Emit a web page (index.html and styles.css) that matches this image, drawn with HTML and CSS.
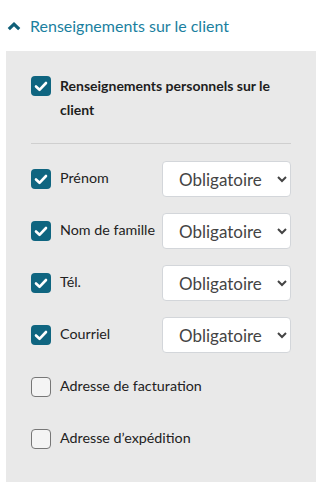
FILE: index.html
```html
<!DOCTYPE html>
<html lang="fr">
<head>
  <meta charset="UTF-8">
  <title>Renseignements sur le client</title>
  <link rel="stylesheet" href="styles.css">
</head>
<body>
  <h3 class="section-title">
    <svg class="caret" width="14" height="9" viewBox="0 0 14 9"><polyline points="1.8,7.2 7,2.2 12.2,7.2" /></svg>
    Renseignements sur le client
  </h3>

  <div class="panel">
    <div class="row title-row">
      <span class="box checked"><svg viewBox="0 0 20 20"><polyline points="5,10.5 8.5,13.8 15,7" /></svg></span>
      <span class="title-label">Renseignements personnels sur le client</span>
    </div>

    <hr class="divider">

    <div class="row">
      <span class="box checked"><svg viewBox="0 0 20 20"><polyline points="5,10.5 8.5,13.8 15,7" /></svg></span>
      <span class="label">Prénom</span>
      <select class="required"><option>Obligatoire</option><option>Facultatif</option></select>
    </div>
    <div class="row">
      <span class="box checked"><svg viewBox="0 0 20 20"><polyline points="5,10.5 8.5,13.8 15,7" /></svg></span>
      <span class="label">Nom de famille</span>
      <select class="required"><option>Obligatoire</option><option>Facultatif</option></select>
    </div>
    <div class="row">
      <span class="box checked"><svg viewBox="0 0 20 20"><polyline points="5,10.5 8.5,13.8 15,7" /></svg></span>
      <span class="label">Tél.</span>
      <select class="required"><option>Obligatoire</option><option>Facultatif</option></select>
    </div>
    <div class="row">
      <span class="box checked"><svg viewBox="0 0 20 20"><polyline points="5,10.5 8.5,13.8 15,7" /></svg></span>
      <span class="label">Courriel</span>
      <select class="required"><option>Obligatoire</option><option>Facultatif</option></select>
    </div>
    <div class="row">
      <span class="box"></span>
      <span class="label">Adresse de facturation</span>
    </div>
    <div class="row">
      <span class="box"></span>
      <span class="label">Adresse d’expédition</span>
    </div>
  </div>
</body>
</html>
```

FILE: styles.css
```css
body {
  margin: 0;
  font-family: 'Lato', 'Open Sans', sans-serif;
  background-color: #fff;
  color: #222;
}
.section-title {
  display: flex;
  align-items: center;
  margin: 0;
  padding: 10px 0 0 7px;
  height: 31px;
  font-size: 16px;
  font-weight: normal;
  line-height: 24px;
  color: #1b7fa0;
}
.caret {
  margin-right: 9px;
  margin-top: 1px;
}
.caret polyline {
  fill: none;
  stroke: #0f5f78;
  stroke-width: 3.2;
}
.panel {
  width: 260px;
  margin: 10px 0 0 6px;
  padding: 23px 25px 25px 25px;
  background-color: #e9e9e9;
}
.row {
  display: flex;
  align-items: center;
  min-height: 36px;
  margin-bottom: 16px;
  font-size: 14.3px;
}
.row:last-child {
  margin-bottom: 0;
}
.title-row {
  align-items: flex-start;
  margin-bottom: 0;
  font-size: 14px;
}
.title-row .box {
  margin-top: 2px;
}
.title-label {
  font-weight: bold;
  line-height: 24px;
  color: #1d1d1d;
}
.box {
  flex-shrink: 0;
  width: 18px;
  height: 18px;
  margin-right: 9px;
  border: 1px solid #777;
  border-radius: 4px;
  background-color: #f4f4f4;
}
.box.checked {
  width: 20px;
  height: 20px;
  border: none;
  background-color: #0f6580;
}
.box svg {
  display: block;
  width: 20px;
  height: 20px;
}
.box polyline {
  fill: none;
  stroke: #fff;
  stroke-width: 2.6;
  stroke-linecap: round;
  stroke-linejoin: round;
}
.label {
  color: #222;
  margin-top: -3px;
}
.divider {
  border: none;
  border-top: 1px solid #cfcfcf;
  margin: 21px 0 17px 0;
}
.required {
  margin-left: auto;
  width: 129px;
  height: 36px;
  padding: 0 4px 0 12px;
  font-family: 'Lato', sans-serif;
  font-size: 17px;
  color: #444;
  background-color: #fff;
  border: 1px solid #d3d6da;
  border-radius: 4px;
}
```
